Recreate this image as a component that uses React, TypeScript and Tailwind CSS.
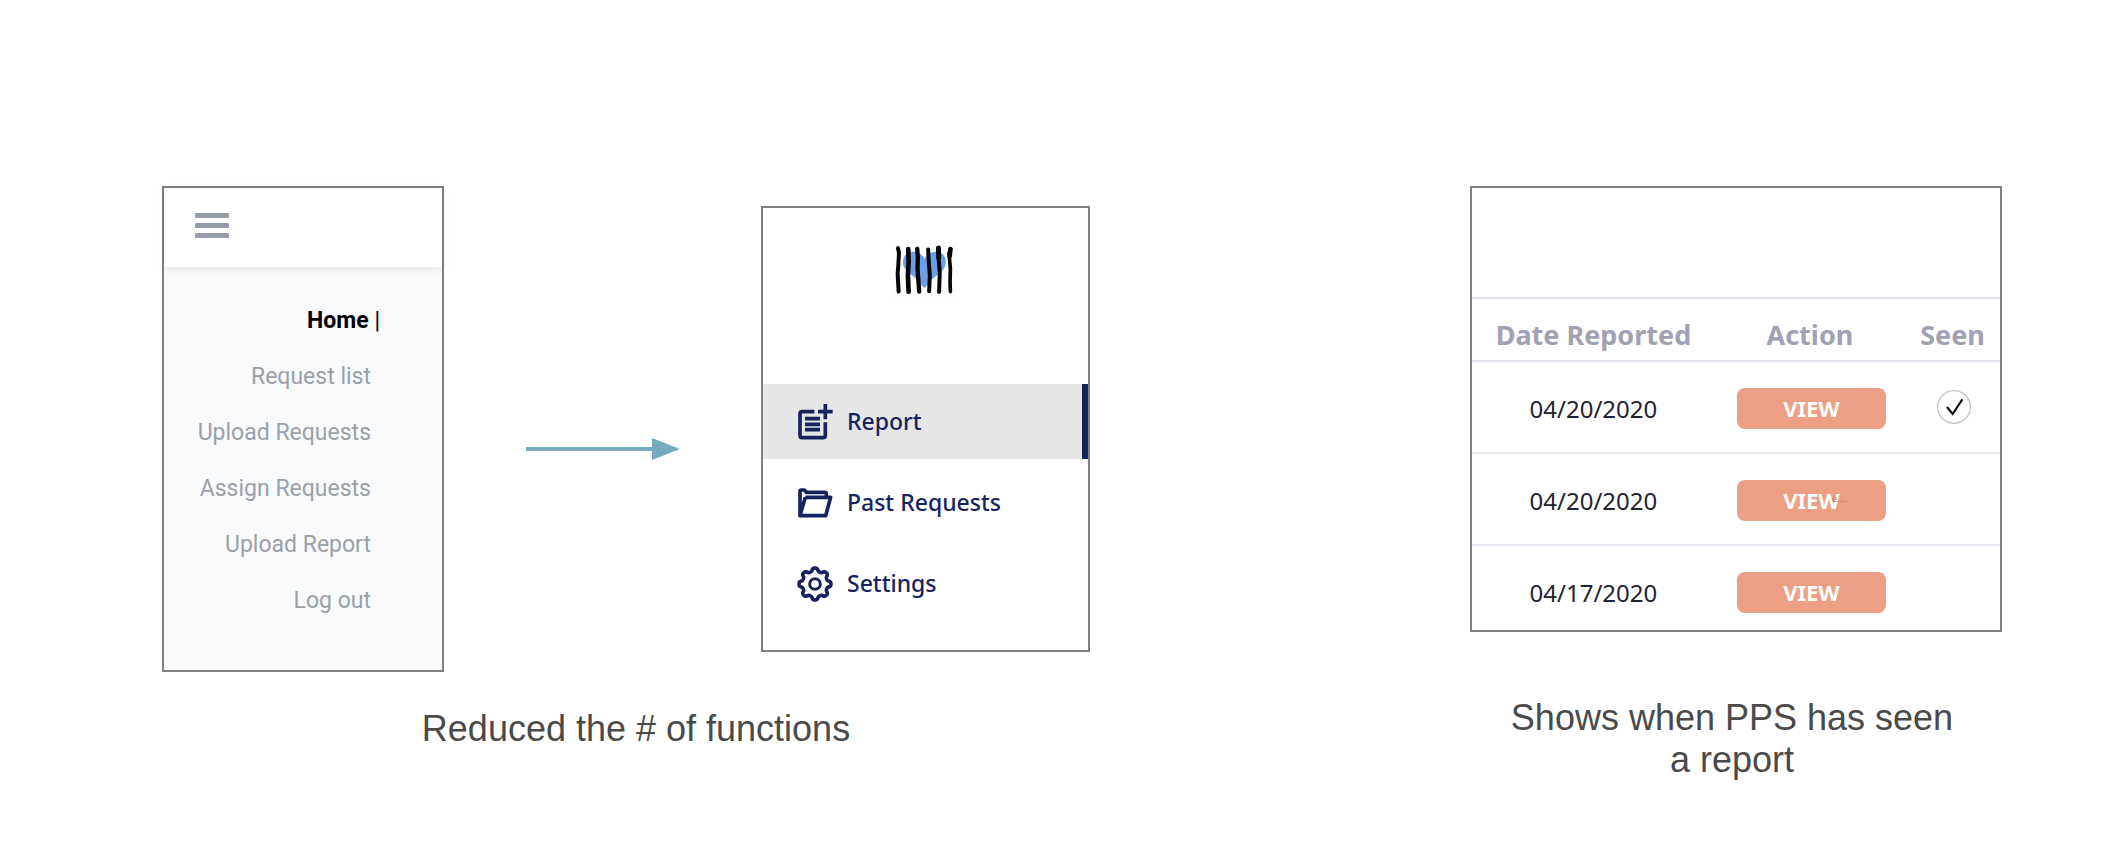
import React from "react";

const oldMenu = ["Request list", "Upload Requests", "Assign Requests", "Upload Report", "Log out"];

const rows = [
  { date: "04/20/2020", seen: true, note: "" },
  { date: "04/20/2020", seen: false, note: "e...." },
  { date: "04/17/2020", seen: false, note: "" },
];

function Logo() {
  return (
    <svg viewBox="0 0 196 168" className="h-14 w-[65px]" role="img" aria-label="Heart behind bars">
      <rect width="196" height="168" fill="#fcfdfd" />
      <path
        d="M95 138 C88 134 82 124 74 114 C58 98 30 86 30 60 C30 42 42 29 59 29 C76 29 88 37 95 49 C102 37 114 29 130 29 C148 29 159 42 159 60 C159 86 134 98 118 112 C108 122 102 134 95 138Z"
        fill="#6a9fe6"
      />
      <g fill="none" stroke="#050508" strokeLinecap="round" strokeLinejoin="round" strokeWidth="12">
        <path d="M15 18 L18 32 L16 70 L14 95 L17 149" />
        <path d="M46 21 L47 60 L45 100 L47 149" strokeWidth="14" />
        <path d="M73 20 L75 45 L74 80 L79 149" strokeWidth="13" />
        <path d="M106 22 L108 60 L111 100 L109 148" />
        <path d="M137 18 L138 55 L141 90 L139 150" />
        <path d="M137 18 L138 48" strokeWidth="15" />
        <path d="M174 21 L169 34 L173 80 L172 120 L173 149" strokeWidth="11" />
        <path d="M173 21 L171 42" strokeWidth="14" />
      </g>
    </svg>
  );
}

function ReportIcon() {
  return (
    <svg viewBox="0 0 105 108" className="h-9 w-[35px]" aria-hidden="true">
      <path
        d="M49 23H12Q6 23 6 29V94Q6 101 12 101H75Q82 101 82 94V55M60 23H104M82 0V46M21 44H66M21 61H66M21 77H66"
        fill="none"
        stroke="currentColor"
        strokeWidth="11"
      />
    </svg>
  );
}

function FolderIcon() {
  return (
    <svg viewBox="0 0 105 90" className="h-[30px] w-[35px]" aria-hidden="true">
      <path
        d="M6 83V10Q6 6 10 6H18Q21 6 22 9L25 13H80Q85 13 85 17V28M22 28H98L83 83H6L22 28"
        fill="none"
        stroke="currentColor"
        strokeWidth="11"
        strokeLinejoin="round"
      />
    </svg>
  );
}

/* Outline with eight rounded teeth, sampled around the circle. */
const gearPath =
  Array.from({ length: 240 }, (_, i) => {
    const angle = (i / 240) * Math.PI * 2;
    const radius = 43 + 5 * Math.tanh(1.8 * Math.cos(8 * angle));
    const x = 54 + radius * Math.cos(angle);
    const y = 54 + radius * Math.sin(angle);
    return `${i === 0 ? "M" : "L"}${x.toFixed(2)} ${y.toFixed(2)}`;
  }).join("") + "Z";

function GearIcon() {
  return (
    <svg viewBox="0 0 108 108" className="size-9" aria-hidden="true">
      <g fill="none" stroke="currentColor" strokeLinejoin="round">
        <path d={gearPath} strokeWidth="11" />
        <circle cx="54" cy="54" r="16" strokeWidth="9" />
      </g>
    </svg>
  );
}

const newMenu = [
  { label: "Report", icon: <ReportIcon />, active: true },
  { label: "Past Requests", icon: <FolderIcon />, active: false },
  { label: "Settings", icon: <GearIcon />, active: false },
];

function OldSidebar() {
  return (
    <div className="h-[486px] border-2 border-[#808080] bg-[#f9fafc] font-['Roboto',sans-serif] text-[23px]">
      <div className="flex h-[79px] items-center bg-white pb-[5px] pl-[31px] shadow-[0_2px_8px_rgba(0,0,0,0.08)]">
        <button type="button" aria-label="Menu" className="flex w-[34px] flex-col gap-[5px]">
          <span className="h-[5px] rounded-[1px] bg-[#969da8]" />
          <span className="h-[5px] rounded-[1px] bg-[#969da8]" />
          <span className="h-[5px] rounded-[1px] bg-[#969da8]" />
        </button>
      </div>
      <nav className="flex flex-col items-end pt-[26px] pr-[71px] leading-[56px] text-[#9aa0ab]">
        <a href="#home" className="-mr-[9px] font-bold whitespace-pre text-black">
          Home<span className="font-normal"> |</span>
        </a>
        {oldMenu.map((label) => (
          <a key={label} href="#menu" className="whitespace-nowrap">
            {label}
          </a>
        ))}
      </nav>
    </div>
  );
}

function NewSidebar() {
  return (
    <div className="h-[446px] border-2 border-[#808080] bg-white font-['Noto_Sans',sans-serif] text-[23px] font-medium text-[#17235c]">
      <div className="flex h-[176px] justify-center pt-[34px]">
        <Logo />
      </div>
      <nav className="flex flex-col gap-[6px]">
        {newMenu.map((item) => (
          <a
            key={item.label}
            href="#section"
            className={
              item.active
                ? "flex h-[75px] items-center gap-[14px] border-r-6 border-[#17235c] bg-[#e6e6e6] pl-[34px]"
                : "flex h-[75px] items-center gap-[14px] pl-[34px]"
            }
          >
            <span className="flex w-9 justify-center">{item.icon}</span>
            {item.label}
          </a>
        ))}
      </nav>
    </div>
  );
}

function ReportsTable() {
  return (
    <div className="h-[446px] overflow-hidden border-2 border-[#808080] bg-white pt-[109px] font-['Noto_Sans',sans-serif]">
      <table className="w-full table-fixed border-collapse text-center">
        <colgroup>
          <col className="w-[46%]" />
          <col className="w-[36%]" />
          <col className="w-[18%]" />
        </colgroup>
        <thead>
          <tr className="h-[63px] border-y-2 border-[#e1e1ed] text-[27px] leading-9 text-[#a0a1b3]">
            <th className="pt-[10px] font-bold">Date Reported</th>
            <th className="pt-[10px] font-bold">Action</th>
            <th className="pt-[10px] font-bold">Seen</th>
          </tr>
        </thead>
        <tbody>
          {rows.map((row, i) => (
            <tr key={i} className="h-[92px] border-b-2 border-[#e6e6f0]">
              <td className="pt-1 text-2xl text-[#24242f]">{row.date}</td>
              <td className="pt-[2px] pl-[3px]">
                <button
                  type="button"
                  className="relative h-[41px] w-[149px] rounded-lg bg-[#ec9f85] align-middle text-[22px] font-bold text-white"
                >
                  VIEW
                  {row.note && (
                    <span className="absolute top-[13px] left-[95px] text-[9px] leading-3 font-normal text-[#b07561]">
                      {row.note}
                    </span>
                  )}
                </button>
              </td>
              <td className="pl-[3px]">
                {row.seen && (
                  <svg viewBox="0 0 102 102" className="inline size-[34px]" role="img" aria-label="Seen">
                    <circle cx="51" cy="51" r="49" fill="none" stroke="#c4c4c4" strokeWidth="4" />
                    <path d="M30 51L47 72L76 28" fill="none" stroke="#050505" strokeWidth="6" />
                  </svg>
                )}
              </td>
            </tr>
          ))}
        </tbody>
      </table>
    </div>
  );
}

export default function App() {
  return (
    <main className="grid min-h-screen grid-cols-[162fr_928fr_380fr_532fr_126fr] items-start bg-white pt-[186px] font-['Liberation_Sans',sans-serif] text-[#4a4a4a]">
      <figure className="col-start-2">
        <div className="grid grid-cols-[282fr_317fr_329fr] items-center">
          <OldSidebar />
          <div className="flex justify-center pt-10">
            <svg viewBox="0 0 154 22" className="h-[22px] w-[154px]" aria-hidden="true">
              <path d="M0 9H126V0L154 11L126 22V13H0Z" fill="#75aac1" />
            </svg>
          </div>
          <NewSidebar />
        </div>
        <figcaption className="pt-[36px] pl-5 text-center text-4xl leading-[42px]">
          Reduced the # of functions
        </figcaption>
      </figure>
      <figure className="col-start-4">
        <ReportsTable />
        <figcaption className="mx-auto max-w-[460px] pt-[65px] pr-2 text-center text-4xl leading-[42px]">
          Shows when PPS has seen a report
        </figcaption>
      </figure>
    </main>
  );
}
